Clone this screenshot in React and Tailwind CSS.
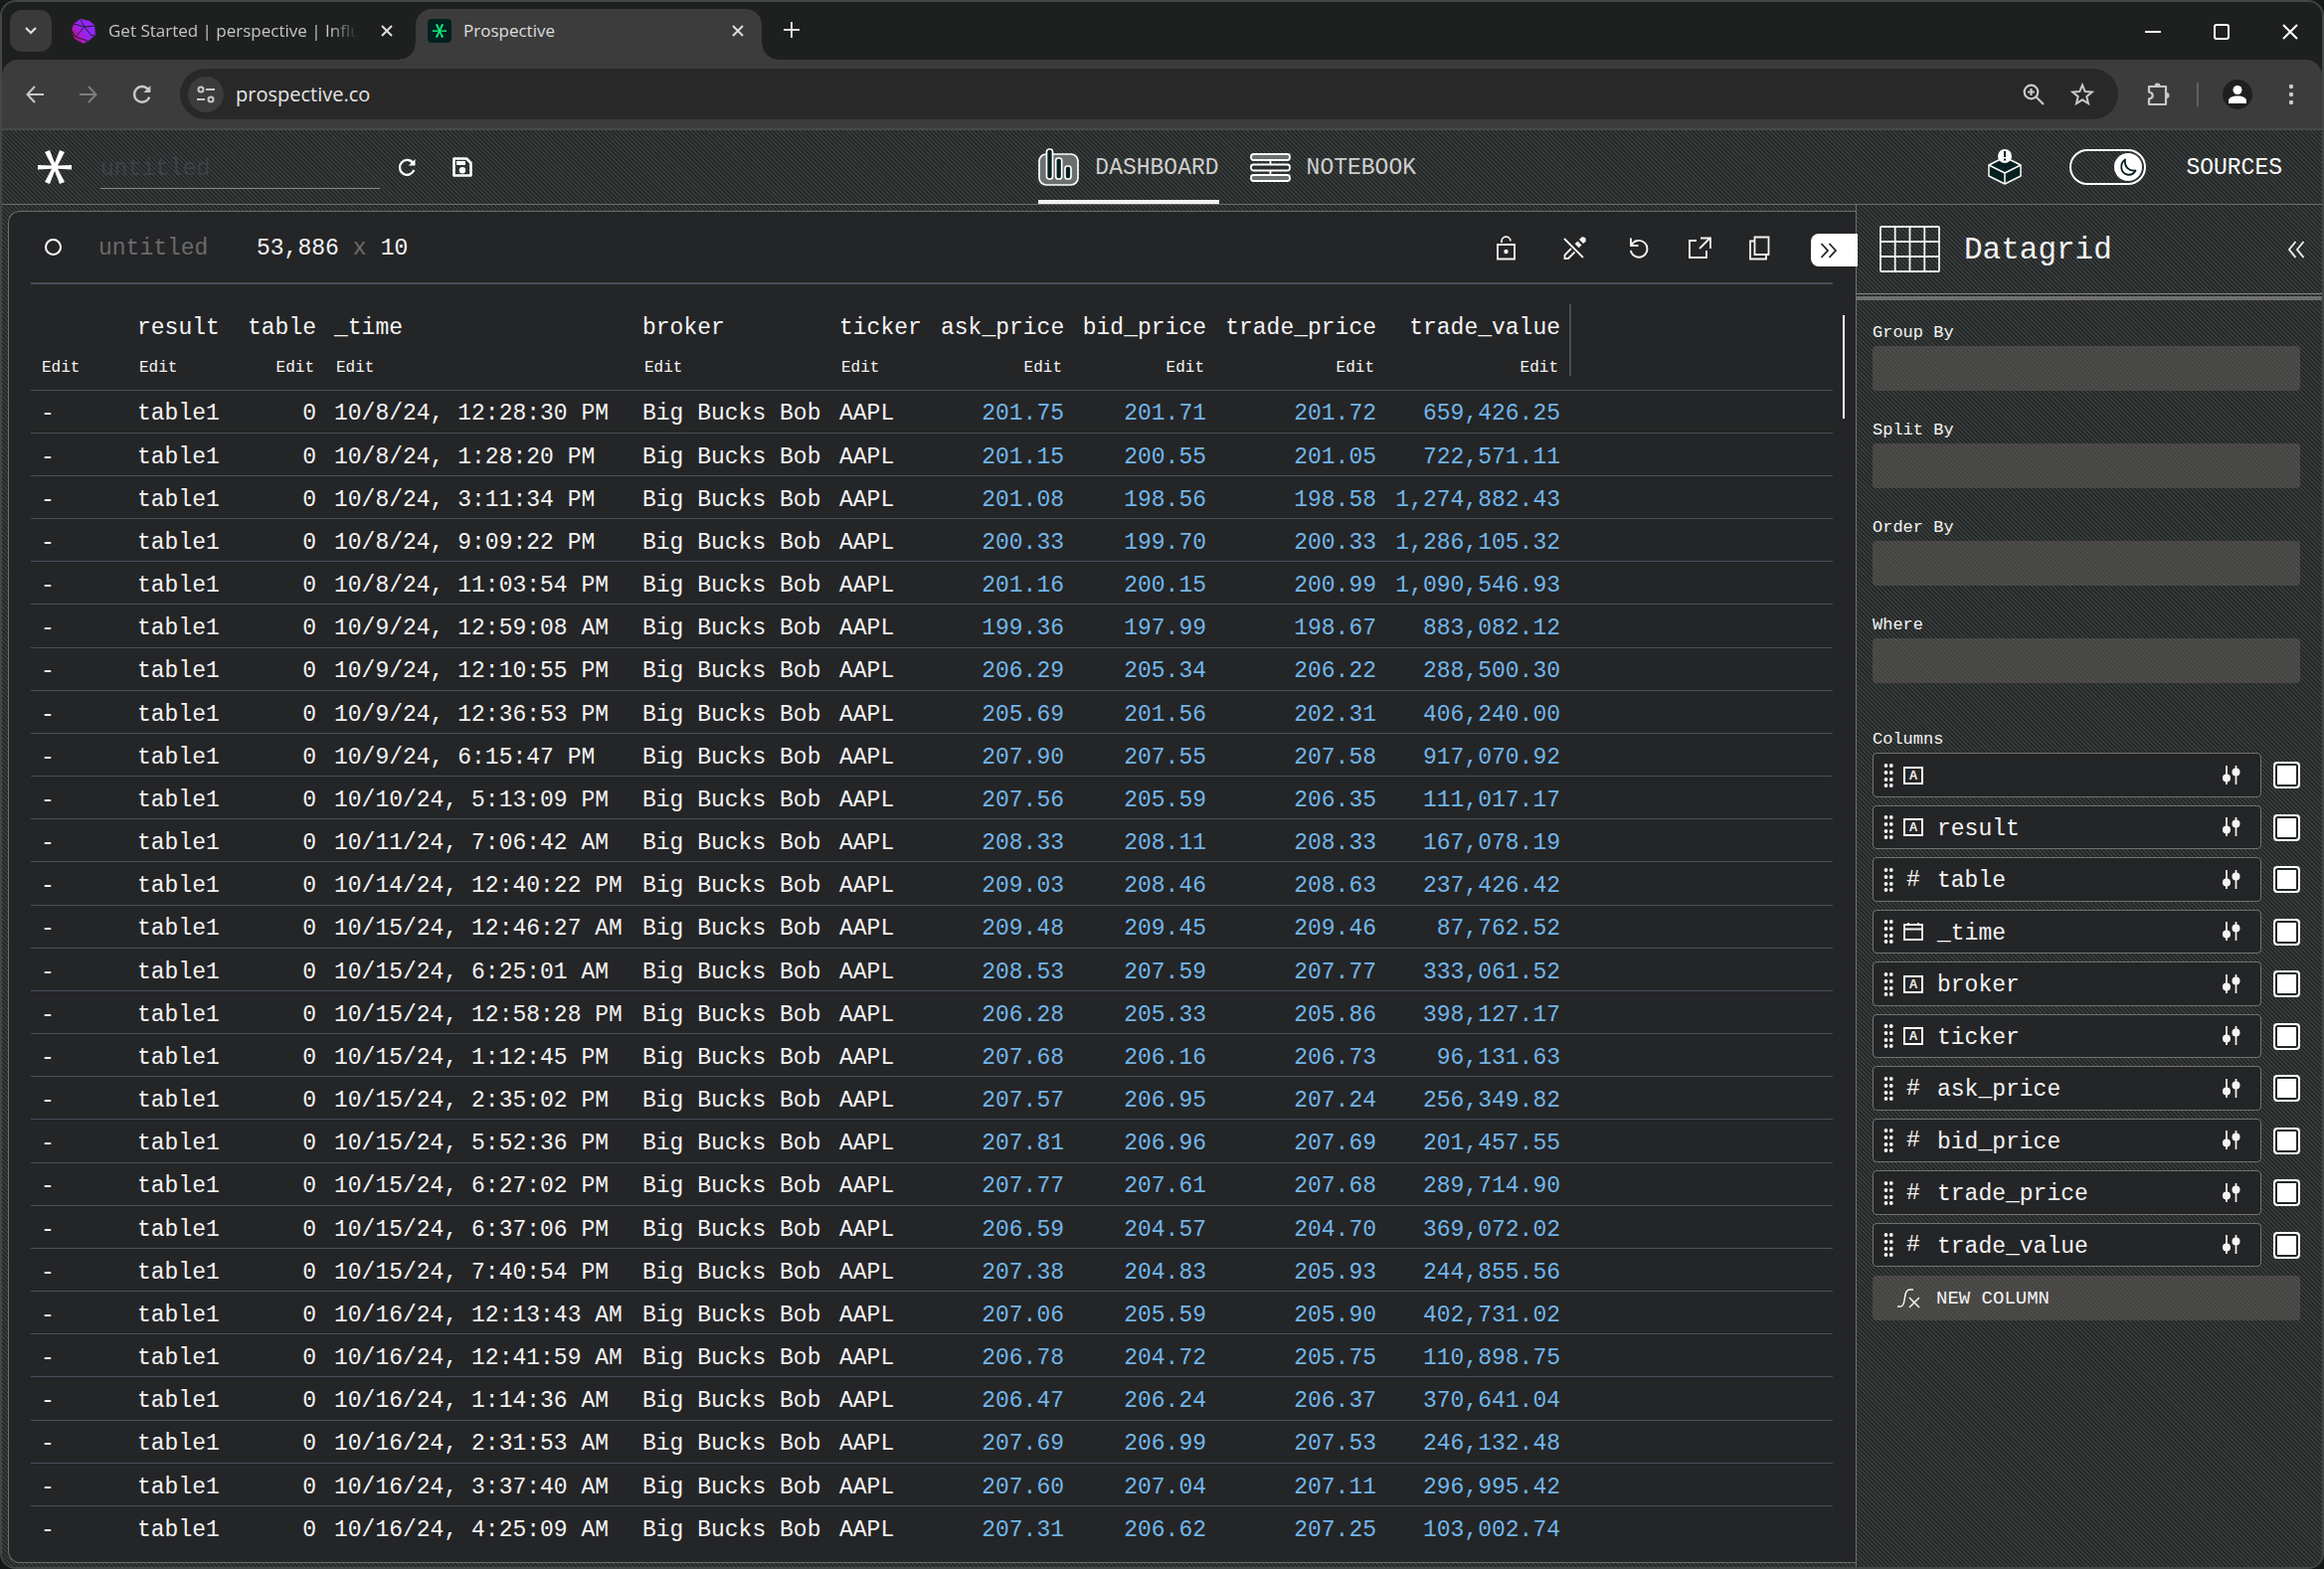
import React from "react";

const HATCH =
  "bg-[#2b2e2e] bg-[repeating-linear-gradient(45deg,#242727_0px,#242727_1px,#434746_2px,#242727_3px)]";
const MONO = "font-['Liberation_Mono',monospace]";

const ROWS = [
  ["10/8/24, 12:28:30 PM", "201.75", "201.71", "201.72", "659,426.25"],
  ["10/8/24, 1:28:20 PM", "201.15", "200.55", "201.05", "722,571.11"],
  ["10/8/24, 3:11:34 PM", "201.08", "198.56", "198.58", "1,274,882.43"],
  ["10/8/24, 9:09:22 PM", "200.33", "199.70", "200.33", "1,286,105.32"],
  ["10/8/24, 11:03:54 PM", "201.16", "200.15", "200.99", "1,090,546.93"],
  ["10/9/24, 12:59:08 AM", "199.36", "197.99", "198.67", "883,082.12"],
  ["10/9/24, 12:10:55 PM", "206.29", "205.34", "206.22", "288,500.30"],
  ["10/9/24, 12:36:53 PM", "205.69", "201.56", "202.31", "406,240.00"],
  ["10/9/24, 6:15:47 PM", "207.90", "207.55", "207.58", "917,070.92"],
  ["10/10/24, 5:13:09 PM", "207.56", "205.59", "206.35", "111,017.17"],
  ["10/11/24, 7:06:42 AM", "208.33", "208.11", "208.33", "167,078.19"],
  ["10/14/24, 12:40:22 PM", "209.03", "208.46", "208.63", "237,426.42"],
  ["10/15/24, 12:46:27 AM", "209.48", "209.45", "209.46", "87,762.52"],
  ["10/15/24, 6:25:01 AM", "208.53", "207.59", "207.77", "333,061.52"],
  ["10/15/24, 12:58:28 PM", "206.28", "205.33", "205.86", "398,127.17"],
  ["10/15/24, 1:12:45 PM", "207.68", "206.16", "206.73", "96,131.63"],
  ["10/15/24, 2:35:02 PM", "207.57", "206.95", "207.24", "256,349.82"],
  ["10/15/24, 5:52:36 PM", "207.81", "206.96", "207.69", "201,457.55"],
  ["10/15/24, 6:27:02 PM", "207.77", "207.61", "207.68", "289,714.90"],
  ["10/15/24, 6:37:06 PM", "206.59", "204.57", "204.70", "369,072.02"],
  ["10/15/24, 7:40:54 PM", "207.38", "204.83", "205.93", "244,855.56"],
  ["10/16/24, 12:13:43 AM", "207.06", "205.59", "205.90", "402,731.02"],
  ["10/16/24, 12:41:59 AM", "206.78", "204.72", "205.75", "110,898.75"],
  ["10/16/24, 1:14:36 AM", "206.47", "206.24", "206.37", "370,641.04"],
  ["10/16/24, 2:31:53 AM", "207.69", "206.99", "207.53", "246,132.48"],
  ["10/16/24, 3:37:40 AM", "207.60", "207.04", "207.11", "296,995.42"],
  ["10/16/24, 4:25:09 AM", "207.31", "206.62", "207.25", "103,002.74"],
];

const HEADERS = [
  { name: "", right: false },
  { name: "result", right: false },
  { name: "table", right: true },
  { name: "_time", right: false },
  { name: "broker", right: false },
  { name: "ticker", right: false },
  { name: "ask_price", right: true },
  { name: "bid_price", right: true },
  { name: "trade_price", right: true },
  { name: "trade_value", right: true },
];

const FIELDS = [
  ["", "string"],
  ["result", "string"],
  ["table", "number"],
  ["_time", "date"],
  ["broker", "string"],
  ["ticker", "string"],
  ["ask_price", "number"],
  ["bid_price", "number"],
  ["trade_price", "number"],
  ["trade_value", "number"],
];

function Icon({ size = "size-6", vb = "0 0 24 24", sw = 2, children }) {
  return (
    <svg className={`${size} shrink-0`} viewBox={vb} fill="none" stroke="currentColor" strokeWidth={sw} aria-hidden="true">
      {children}
    </svg>
  );
}

const CloseX = () => (
  <Icon size="size-3" vb="0 0 12 12">
    <path d="M1 1l10 10M11 1L1 11" />
  </Icon>
);

const Reload = ({ size }) => (
  <Icon size={size} vb="0 0 20 20" sw={2.4}>
    <path d="M17.2 12.6A7.8 7.8 0 1 1 16 5" />
    <path d="M18.4 1v7h-7z" fill="currentColor" stroke="none" />
  </Icon>
);

function Gem() {
  return (
    <svg className="size-[25px] shrink-0" viewBox="0 0 25 25" aria-hidden="true">
      <defs>
        <linearGradient id="gem" x1="0" y1="1" x2="1" y2="0.2">
          <stop offset="0" stopColor="#d30971" />
          <stop offset="0.6" stopColor="#9326ff" />
        </linearGradient>
      </defs>
      <path d="M9 0l9 2 5 4 1 10-7 6-5 3-9-5L0 11l2-6z" fill="url(#gem)" />
      <path d="M2 5l11 3 10-1M13 8L9 1M13 8l-9 10 12 4M13 8l7 9 3-1M4 18L0 11" stroke="#1e2020" fill="none" />
    </svg>
  );
}

function Asterisk({ className }) {
  return (
    <svg className={className} viewBox="0 0 34 34" fill="currentColor" aria-hidden="true">
      <path d="M0 15l14 .6L7 2l5-2 5 13 5-13 5 2-7 13.600 14-.6v4.400l-14-.6L27 32l-5 2-5-13-5 13-5-2 7-13.200-14 .6z" />
    </svg>
  );
}

function TabStrip() {
  return (
    <div className="flex h-[58px] items-end bg-[#1e2020] pr-6 pl-2 text-[#dedede]">
      <button aria-label="Search tabs" className="mb-2 flex h-[42px] w-[42px] items-center justify-center rounded-xl bg-[#3a3a3a]">
        <Icon size="size-3.5" vb="0 0 14 14" sw={2.2}>
          <path d="M2 4l5 5 5-5" />
        </Icon>
      </button>
      <div role="tab" className="mb-1 ml-5 flex h-[50px] w-[346px] items-center gap-3">
        <Gem />
        <span className="w-[262px] overflow-hidden text-[17px] whitespace-nowrap text-[#c4c4c4] [mask-image:linear-gradient(to_right,black_85%,transparent_96%)]">
          Get Started | perspective | Influx
        </span>
        <button aria-label="Close tab">
          <CloseX />
        </button>
      </div>
      <div role="tab" className="relative flex h-[51px] w-[348px] items-center rounded-t-2xl bg-[#3c3c3c] px-3 pb-2">
        <span className="absolute bottom-0 -left-4 size-4 bg-[radial-gradient(circle_at_0_0,transparent_15px,#3c3c3c_16px)]" />
        <span className="absolute -right-4 bottom-0 size-4 bg-[radial-gradient(circle_at_100%_0,transparent_15px,#3c3c3c_16px)]" />
        <span className="flex size-6 items-center justify-center rounded-sm bg-[#05201f]">
          <Asterisk className="size-3.5 text-[#12e87c]" />
        </span>
        <span className="ml-3 flex-1 text-[17px]">Prospective</span>
        <button aria-label="Close tab" className="mr-1.5">
          <CloseX />
        </button>
      </div>
      <button aria-label="New tab" className="mb-[22px] ml-[22px]">
        <Icon size="size-4" vb="0 0 16 16">
          <path d="M8 0v16M0 8h16" />
        </Icon>
      </button>
      <div className="mb-5 ml-auto flex items-center gap-[53px] text-white">
        <button aria-label="Minimize">
          <Icon size="size-4" vb="0 0 16 16">
            <path d="M0 8h16" />
          </Icon>
        </button>
        <button aria-label="Maximize">
          <Icon size="size-4" vb="0 0 16 16">
            <rect x="1" y="1" width="14" height="14" rx="2" />
          </Icon>
        </button>
        <button aria-label="Close window">
          <Icon size="size-4" vb="0 0 16 16">
            <path d="M1 1l14 14M15 1L1 15" />
          </Icon>
        </button>
      </div>
    </div>
  );
}

function Toolbar() {
  return (
    <div className="flex h-[71px] items-center rounded-t-2xl border-b-2 border-[#474a49] bg-[#3c3c3c] pr-7 pl-6 text-[#c8c8c8]">
      <button aria-label="Back">
        <Icon size="size-[18px]" vb="0 0 18 18">
          <path d="M18 9H2M9 1L1.500 9 9 17" />
        </Icon>
      </button>
      <button aria-label="Forward" className="ml-9 text-[#7d7d7d]">
        <Icon size="size-[18px]" vb="0 0 18 18">
          <path d="M0 9h16M9 1l7.500 8L9 17" />
        </Icon>
      </button>
      <button aria-label="Reload" className="ml-[35px]">
        <Reload size="size-5" />
      </button>
      <div className="ml-7 flex h-[51px] flex-1 items-center rounded-full bg-[#282828] pr-6 pl-2">
        <button aria-label="Site information" className="flex size-9 items-center justify-center rounded-full bg-[#3c3c3c]">
          <Icon size="size-[18px]" vb="0 0 18 18">
            <circle cx="4" cy="4" r="2.500" />
            <path d="M9 4h9M0 14h8" />
            <circle cx="14" cy="14" r="2.500" />
          </Icon>
        </button>
        <input
          aria-label="Address"
          defaultValue="prospective.co"
          className="ml-3 min-w-0 flex-1 bg-transparent text-[20px] text-[#e6e6e6] outline-none"
        />
        <button aria-label="Zoom">
          <Icon size="size-[22px]" vb="0 0 22 22" sw={2.200}>
            <circle cx="8.500" cy="8.500" r="6.800" />
            <path d="M13.500 13.500L21 21M8.500 5v7M5 8.500h7" />
          </Icon>
        </button>
        <button aria-label="Bookmark" className="ml-[26px]">
          <Icon size="size-6" sw={2}>
            <path d="M12 2.500l2.700 6.600 7 .5-5.400 4.600 1.700 6.900L12 17.300l-6 3.800 1.700-6.900L2.300 9.600l7-.5z" />
          </Icon>
        </button>
      </div>
      <button aria-label="Extensions" className="ml-7">
        <Icon size="size-[26px]" vb="0 0 26 26" sw={2.200}>
          <path d="M3 5h17v18H3v-5.500c5-1 5-6 0-7z" strokeLinejoin="round" />
          <path d="M8.500 4.500a3 3 0 0 1 6 0zM20.500 11a3 3 0 0 1 0 6z" fill="currentColor" stroke="none" />
        </Icon>
      </button>
      <span className="ml-[25px] h-6 w-0.5 bg-[#626262]" />
      <button aria-label="Profile" className="ml-6 flex size-[30px] items-center justify-center rounded-full bg-[#1e2020] text-white">
        <svg className="size-[18px]" viewBox="0 0 18 18" fill="currentColor" aria-hidden="true">
          <circle cx="9" cy="4.500" r="4.500" />
          <path d="M0 18v-2.500C0 12 4 10.500 9 10.500s9 1.500 9 5V18z" />
        </svg>
      </button>
      <button aria-label="Menu" className="ml-9">
        <svg className="h-[22px] w-1.5" viewBox="0 0 6 22" fill="currentColor" aria-hidden="true">
          <circle cx="3" cy="3" r="2.200" />
          <circle cx="3" cy="11" r="2.200" />
          <circle cx="3" cy="19" r="2.200" />
        </svg>
      </button>
    </div>
  );
}

function AppHeader() {
  return (
    <header className="flex h-[75px] items-center justify-between border-b border-[#6e6e6e] pr-10 pl-9 text-[23px] text-white">
      <div className="flex items-center">
        <Asterisk className="size-[34px]" />
        <input
          aria-label="Layout name"
          placeholder="untitled"
          className="mt-1 ml-[29px] h-10 w-[281px] border-b border-[#8a8a8a] bg-transparent text-[23px] outline-none placeholder:text-[#3c424b]"
        />
        <button aria-label="Refresh" className="ml-[18px]">
          <Reload size="size-[19px]" />
        </button>
        <button aria-label="Save" className="ml-9">
          <svg className="size-5" viewBox="0 0 20 20" aria-hidden="true">
            <path d="M1.500 1.500h12.500l4.500 4.500v12.500h-17z" fill="none" stroke="currentColor" strokeWidth="2.600" strokeLinejoin="round" />
            <path d="M4 4h9v4H4z" fill="currentColor" />
            <circle cx="10" cy="13.200" r="3.200" fill="currentColor" />
          </svg>
        </button>
      </div>
      <nav className="mr-1.5 flex h-[73px] gap-[31px] text-[#cfcfcf]">
        <a href="#dashboard" className="flex items-center gap-4 border-b-4 border-[#f2f2f2] pt-1">
          <svg className="h-[38px] w-[41px]" viewBox="0 0 41 38" stroke="#fff" strokeWidth="1.700" aria-hidden="true">
            <rect x="1" y="6" width="39" height="31" rx="7" fill="#6b6f6e" />
            <rect x="8.500" y="1" width="6" height="30" rx="2.500" fill="#05201f" />
            <rect x="17.700" y="10" width="6" height="21" rx="2.500" fill="#05201f" />
            <rect x="27" y="18" width="6" height="13" rx="2.500" fill="#05201f" />
          </svg>
          <span className="pt-[3px]">DASHBOARD</span>
        </a>
        <a href="#notebook" className="flex items-center gap-4 border-b-4 border-transparent pt-1">
          <svg className="h-[29px] w-[41px]" viewBox="0 0 41 29" stroke="#fff" strokeWidth="1.800" aria-hidden="true">
            <path d="M20.500 7v15" />
            <rect x="1" y="1" width="39" height="6" rx="2.500" fill="#6b6f6e" />
            <rect x="1" y="11.500" width="39" height="6" rx="2.500" fill="#2b2e2e" />
            <rect x="1" y="22" width="39" height="6" rx="2.500" fill="#6b6f6e" />
          </svg>
          <span className="pt-[3px]">NOTEBOOK</span>
        </a>
      </nav>
      <div className="flex items-center">
        <button aria-label="Packages">
          <svg className="h-9 w-[34px]" viewBox="0 0 34 36" aria-hidden="true">
            <g fill="#05201f" stroke="#fff" strokeWidth="1.500" strokeLinejoin="round">
              <path d="M17 8l16 8v11l-16 8-16-8V16z" />
              <path d="M1 16l16 8 16-8M17 24v11" />
            </g>
            <circle cx="17" cy="7" r="7" fill="#fff" />
            <path d="M17 2v6M17 9.500v2" stroke="#05201f" strokeWidth="2" />
          </svg>
        </button>
        <button role="switch" aria-checked="true" aria-label="Dark mode" className="ml-12 flex h-9 w-[77px] items-center justify-end rounded-full border-2 border-white pr-0.5">
          <span className="flex size-7 items-center justify-center rounded-full bg-white text-[#05201f]">
            <Icon size="size-5" vb="0 0 20 20" sw={1.800}>
              <path d="M7 2.500C1 7 2.500 16 9 17.500c4 .8 7-1 8.500-4C11 14.500 6 10 7 2.500z" strokeLinejoin="round" />
            </Icon>
          </span>
        </button>
        <button className="ml-10 pt-[3px]">SOURCES</button>
      </div>
    </header>
  );
}

function PanelHeader() {
  return (
    <div className="flex h-[73px] shrink-0 items-center border-b-2 border-[#484c58]">
      <span className="ml-3.5 size-[17px] rounded-full border-2 border-white" />
      <input
        aria-label="Table name"
        placeholder="untitled"
        className="ml-[37px] w-[159px] bg-transparent pt-[3px] text-[23px] outline-none placeholder:text-[#6a6a6a]"
      />
      <span className="flex items-center pt-[3px]">
        53,886
        <span className="mx-3.5 text-[#6e6e6e]">x</span>
        10
      </span>
      <div className="mr-[61px] ml-auto flex items-center">
        <button aria-label="Lock">
          <Icon size="size-[26px]" vb="0 0 26 26" sw={1.800}>
            <path d="M4 10h17v14.500H4zM8 8V7a4.500 4.500 0 0 1 9-.6" />
            <circle cx="12.500" cy="17" r="1.300" fill="currentColor" />
          </Icon>
        </button>
        <button aria-label="Editing off" className="ml-[43px]">
          <Icon size="size-[26px]" vb="0 0 26 26" sw={1.800}>
            <path d="M2 4l19 19M9 14L2.500 20.500V24H6l6.500-6.500" />
            <path d="M19.500 2.500a3.200 3.200 0 0 1 4 4.500l-2.500 2-4-4zM15.500 6.500l4 4-2.800 2.800-4-4z" fill="currentColor" stroke="none" />
          </Icon>
        </button>
        <button aria-label="Reset" className="ml-[38px]">
          <Icon size="size-[26px]" vb="0 0 26 26" sw={1.900}>
            <path d="M5 3.500v7.500h7.500M5.500 10.500A8.400 8.400 0 1 1 4.800 16" />
          </Icon>
        </button>
        <button aria-label="Export" className="ml-[35px]">
          <Icon size="size-[26px]" vb="0 0 26 26" sw={1.800}>
            <path d="M10 6H3v17h17v-7M13 14L23 4M14 3.500h10V14" />
          </Icon>
        </button>
        <button aria-label="Copy" className="ml-[34px]">
          <Icon size="size-[26px]" vb="0 0 26 26" sw={1.800}>
            <path d="M8.500 2.500h14v17.500h-14zM8.500 6.500h-4.500v18h16v-4.500" />
          </Icon>
        </button>
      </div>
    </div>
  );
}

function DataTable() {
  return (
    <table className="mt-5 h-px w-full flex-1 table-fixed border-collapse">
      <colgroup>
        <col className="w-[98px]" />
        <col className="w-[102px]" />
        <col className="w-[96px]" />
        <col className="w-[310px]" />
        <col className="w-[198px]" />
        <col className="w-[102px]" />
        <col className="w-[142px]" />
        <col className="w-[143px]" />
        <col className="w-[171px]" />
        <col className="w-[185px]" />
        <col />
      </colgroup>
      <thead>
        <tr className="h-[86px] border-b border-[#4b4e5a]">
          {HEADERS.map((h) => (
            <th key={h.name} scope="col" className={`px-[9px] align-top font-normal ${h.right ? "text-right" : "text-left"}`}>
              <span className="block h-12 pt-1.5 leading-9">{h.name}</span>
              <button className="block w-full px-0.5 [text-align:inherit] text-[16px] leading-8">Edit</button>
            </th>
          ))}
          <td className="align-top">
            <span className="block h-[72px] border-l-2 border-[#484c58]" />
          </td>
        </tr>
      </thead>
      <tbody>
        {ROWS.map(([time, ...nums], i) => (
          <tr key={i} className="h-[43px] border-b border-[#4b4e5a] last:border-b-0">
            <td className="px-2.5 pt-1.5">-</td>
            <td className="px-[9px] pt-1.5">table1</td>
            <td className="px-[9px] pt-1.5 text-right">0</td>
            <td className="px-[9px] pt-1.5 whitespace-nowrap">{time}</td>
            <td className="px-[9px] pt-1.5 whitespace-nowrap">Big Bucks Bob</td>
            <td className="px-[9px] pt-1.5">AAPL</td>
            {nums.map((n, j) => (
              <td key={j} className="px-[9px] pt-1.5 text-right text-[#71b5e8]">
                {n}
              </td>
            ))}
            <td />
          </tr>
        ))}
      </tbody>
    </table>
  );
}

function TypeIcon({ type }) {
  if (type === "number") return <span className="w-5 text-center text-[23px] leading-5">#</span>;
  if (type === "date")
    return (
      <Icon size="size-5" vb="0 0 20 20" sw={1.800}>
        <path d="M1 3h18v15H1zM1 7.500h18M5 1v3M15 1v3" />
      </Icon>
    );
  return (
    <span className="flex h-[18px] w-5 items-center justify-center border-2 border-white font-['Liberation_Sans',sans-serif] text-[12px] leading-none font-bold">
      A
    </span>
  );
}

function Field({ name, type }) {
  return (
    <li className="flex items-center justify-between odd:h-[45px] even:h-11">
      <div className="mr-3 flex h-full flex-1 items-center rounded border border-[#727272] bg-[#242527] pr-[19px] pl-2.5">
        <svg className="h-6 w-2.5" viewBox="0 0 10 24" fill="currentColor" aria-hidden="true">
          {[2, 9, 16, 22].map((y) => (
            <g key={y}>
              <circle cx="2.500" cy={y} r="1.900" />
              <circle cx="7.800" cy={y} r="1.900" />
            </g>
          ))}
        </svg>
        <span className="ml-2.5 flex">
          <TypeIcon type={type} />
        </span>
        <span className="ml-3.5 flex-1 pt-1">{name}</span>
        <button aria-label={`Configure ${name}`}>
          <Icon size="size-5" vb="0 0 20 20" sw={1.700}>
            <path d="M5 0v19M14.500 0v19" />
            <circle cx="5" cy="12.500" r="3.200" fill="currentColor" />
            <circle cx="14.500" cy="6.500" r="3.200" fill="currentColor" />
          </Icon>
        </button>
      </div>
      <input
        type="checkbox"
        defaultChecked
        aria-label={`Show ${name}`}
        className="size-[27px] appearance-none rounded border-2 border-white bg-white shadow-[inset_0_0_0_2px_#242727]"
      />
    </li>
  );
}

function Sidebar() {
  return (
    <aside className="flex w-[469px] shrink-0 flex-col border-l border-[#6e6e6e]">
      <div className="flex h-[90px] items-center border-b border-[#8a8a8a] pr-4 pl-[23px]">
        <Icon size="h-[47px] w-[61px]" vb="0 0 61 47" sw={1.800}>
          <rect x="1" y="1" width="59" height="45" rx="1" />
          <path d="M15.700 1v45M30.500 1v45M45.300 1v45M1 16h59M1 31h59" />
        </Icon>
        <span className="ml-6 flex-1 pt-1 text-[31px]">Datagrid</span>
        <button aria-label="Collapse settings">
          <Icon size="size-5" vb="0 0 20 20" sw={1.800}>
            <path d="M9.500 2L3 10l6.500 8M17.500 2L11 10l6.500 8" />
          </Icon>
        </button>
      </div>
      <div className="mt-0.5 h-1 bg-[#6f6f6f]" />
      <div className="flex flex-col gap-7 pt-[21px] pr-[22px] pl-4">
        {["Group By", "Split By", "Order By", "Where"].map((label) => (
          <label key={label} className="block text-[17px] leading-6">
            {label}
            <input className="mt-px block h-[45px] w-full rounded bg-[#5c5855]/60 px-3 outline-none" />
          </label>
        ))}
      </div>
      <div className="pt-[45px] pr-[22px] pl-4">
        <h2 className="text-[17px] leading-6">Columns</h2>
        <ul className="mt-px flex flex-col gap-2">
          {FIELDS.map(([name, type]) => (
            <Field key={name} name={name} type={type} />
          ))}
        </ul>
        <button className="mt-[9px] flex h-[45px] w-full items-center rounded bg-[#5c5855]/60 pl-6 text-[19px]">
          <Icon size="size-6" sw={1.500}>
            <path d="M1 20h3q3 0 4-6l1-6q1-5 5-5h3M13 11l10 10M23 11L13 21" />
          </Icon>
          <span className="ml-4 pt-0.5">NEW COLUMN</span>
        </button>
      </div>
    </aside>
  );
}

export default function App() {
  return (
    <div className="h-screen min-h-[1578px] bg-[#171918]">
      <div className="flex h-full flex-col overflow-hidden rounded-2xl border-2 border-[#444746] bg-[#1e2020] font-['Open_Sans',sans-serif]">
        <TabStrip />
        <Toolbar />
        <div className={`flex min-h-0 flex-1 flex-col ${HATCH} ${MONO}`}>
          <AppHeader />
          <main className="flex min-h-0 flex-1 text-[23px] text-[#f4f4f4]">
            <section className="relative mt-1.5 mb-1 ml-1.5 flex min-w-0 flex-1 flex-col rounded-l-xl border border-r-0 border-[#6e6e6e] bg-[#242527] pr-[23px] pb-[13px] pl-[22px]">
              <PanelHeader />
              <DataTable />
              <button
                aria-label="Toggle settings"
                className="absolute top-[22px] -right-0.5 flex h-[33px] w-[47px] items-center rounded-l-lg bg-white pl-2 text-[#242527]"
              >
                <Icon size="size-5" vb="0 0 20 20" sw={1.800}>
                  <path d="M2.500 3L9 10l-6.500 7M10.500 3L17 10l-6.500 7" />
                </Icon>
              </button>
              <span className="absolute top-[104px] right-[11px] h-[104px] w-0.5 bg-white" />
            </section>
            <Sidebar />
          </main>
        </div>
      </div>
    </div>
  );
}
